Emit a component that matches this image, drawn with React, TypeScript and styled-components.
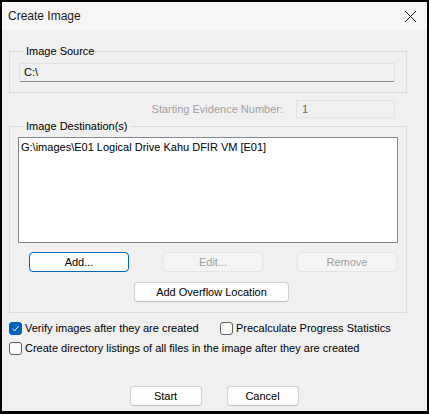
import styled, {createGlobalStyle} from 'styled-components'

const GlobalStyle = createGlobalStyle`
    html, body {
        margin: 0;
        padding: 0;
        background: #000000;
    }
    body {
        font-family: "Liberation Sans", Arial, sans-serif;
        font-size: 11px;
        color: #000000;
    }
    * {
        box-sizing: border-box;
    }
`

const Window = styled.div`
    width: 429px;
    height: 414px;
    border: 2px solid #000000;
    border-bottom-width: 3px;
    background: #f0f0f0;
    display: flex;
    flex-direction: column;
`
const TitleBar = styled.div`
    height: 28px;
    background: #f8f6f5;
    display: flex;
    align-items: center;
    justify-content: space-between;
    padding-left: 6px;
    padding-right: 10px;
    font-size: 12px;
    color: #1a1a1a;
`
const CloseBtn = styled.div`
    width: 13px;
    height: 13px;
    display: flex;
    margin-top: 1px;
`
const Body = styled.div`
    flex: 1;
    padding: 13px 20px 0 7px;
    display: flex;
    flex-direction: column;
`
const Group = styled.fieldset`
    margin: 0;
    padding: 0 8px 10px 8px;
    border: 1px solid #dcdcdc;
    min-width: 0;
`
const Legend = styled.legend`
    margin-left: 6px;
    padding: 0 2px;
    height: 16px;
    line-height: 16px;
`
const SourceField = styled.div`
    margin: 4px 3px 0 1px;
    height: 19px;
    background: #f0f0f0;
    border: 1px solid #e1e1e1;
    border-bottom-color: #8a8a8a;
    padding-left: 4px;
    line-height: 17px;
    border-radius: 2px;
`
const EvidenceRow = styled.div`
    display: flex;
    justify-content: flex-end;
    align-items: center;
    gap: 13px;
    margin: 7px 12px 0 0;
    color: #a0a0a0;
`
const EvidenceInput = styled.div`
    width: 99px;
    height: 18px;
    border: 1px solid #e3e3e3;
    background: #f0f0f0;
    padding-left: 5px;
    line-height: 16px;
    color: #6a6a6a;
`
const ListBox = styled.div`
    margin-top: 3px;
    height: 106px;
    background: #ffffff;
    border: 1px solid #828790;
    padding: 3px 2px;
`
const ButtonRow = styled.div`
    display: flex;
    gap: 34px;
    margin: 9px 0 0 11px;
`
const Button = styled.div<{$w: number; $focus?: boolean; $off?: boolean}>`
    width: ${(p) => p.$w}px;
    height: 20px;
    display: flex;
    align-items: center;
    justify-content: center;
    border-radius: 4px;
    background: ${(p) => (p.$off ? '#f5f5f5' : '#fdfdfd')};
    border: 1px solid ${(p) => (p.$focus ? '#0067c0' : p.$off ? '#e5e5e5' : '#d0d0d0')};
    border-bottom-color: ${(p) => (p.$focus ? '#0067c0' : p.$off ? '#e5e5e5' : '#bcbcbc')};
    box-shadow: ${(p) => (p.$focus ? 'inset 0 0 0 1px #ffffff' : 'none')};
    color: ${(p) => (p.$off ? '#a0a0a0' : '#000000')};
`
const OverflowRow = styled.div`
    margin: 10px 0 0 116px;
`
const Options = styled.div`
    display: flex;
    flex-direction: column;
    gap: 6px;
    margin-top: 8px;
`
const OptionRow = styled.div`
    display: flex;
    align-items: center;
`
const Check = styled.label<{$w?: number}>`
    display: flex;
    align-items: center;
    gap: 3px;
    height: 14px;
    width: ${(p) => (p.$w ? `${p.$w}px` : 'auto')};
`
const Box = styled.span<{$on?: boolean}>`
    width: 13px;
    height: 13px;
    border-radius: 3px;
    display: flex;
    align-items: center;
    justify-content: center;
    background: ${(p) => (p.$on ? '#005fb8' : '#fbfbfb')};
    border: 1px solid ${(p) => (p.$on ? '#005fb8' : '#5f5f5f')};
`
const Footer = styled.div`
    display: flex;
    justify-content: center;
    gap: 25px;
    margin-top: 31px;
    padding-left: 12px;
`

function CheckBox({on, label, width}: {on?: boolean; label: string; width?: number}) {
    return (
        <Check $w={width}>
            <Box $on={on}>
                {on && (
                    <svg width="9" height="9" viewBox="0 0 9 9">
                        <path d="M1.5 4.8 L3.6 6.8 L7.6 2.2" fill="none" stroke="#ffffff" strokeWidth="1" />
                    </svg>
                )}
            </Box>
            <span>{label}</span>
        </Check>
    )
}

export default function App() {
    return (
        <>
            <GlobalStyle />
            <Window>
                <TitleBar>
                    <span>Create Image</span>
                    <CloseBtn>
                        <svg width="13" height="13" viewBox="0 0 13 13">
                            <path d="M1 1 L12 12 M12 1 L1 12" stroke="#1a1a1a" strokeWidth="1" />
                        </svg>
                    </CloseBtn>
                </TitleBar>
                <Body>
                    <Group>
                        <Legend>Image Source</Legend>
                        <SourceField>C:\</SourceField>
                    </Group>
                    <EvidenceRow>
                        <span>Starting Evidence Number:</span>
                        <EvidenceInput>1</EvidenceInput>
                    </EvidenceRow>
                    <Group>
                        <Legend>Image Destination(s)</Legend>
                        <ListBox>G:\images\E01 Logical Drive Kahu DFIR VM [E01]</ListBox>
                        <ButtonRow>
                            <Button $w={100} $focus>
                                Add...
                            </Button>
                            <Button $w={100} $off>
                                Edit...
                            </Button>
                            <Button $w={100} $off>
                                Remove
                            </Button>
                        </ButtonRow>
                        <OverflowRow>
                            <Button $w={155}>Add Overflow Location</Button>
                        </OverflowRow>
                    </Group>
                    <Options>
                        <OptionRow>
                            <CheckBox on width={211} label="Verify images after they are created" />
                            <CheckBox label="Precalculate Progress Statistics" />
                        </OptionRow>
                        <OptionRow>
                            <CheckBox label="Create directory listings of all files in the image after they are created" />
                        </OptionRow>
                    </Options>
                    <Footer>
                        <Button $w={72}>Start</Button>
                        <Button $w={72}>Cancel</Button>
                    </Footer>
                </Body>
            </Window>
        </>
    )
}
